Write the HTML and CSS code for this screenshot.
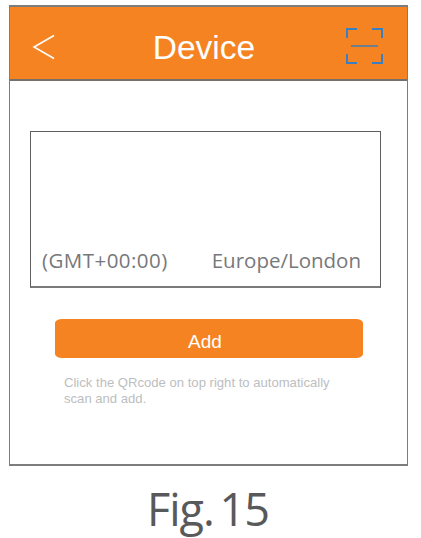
FILE: index.html
```html
<!DOCTYPE html>
<html lang="en">
<head>
  <meta charset="UTF-8">
  <title>Device</title>
  <link rel="stylesheet" href="styles.css">
</head>
<body>

  <div class="phone">
    <div class="header">
      <svg class="back-icon" width="24" height="26" viewBox="0 0 24 26">
        <path d="M22 1.5 L2 13 L22 24.5" fill="none" stroke="#fff" stroke-width="1.6"/>
      </svg>
      <div class="header-title">Device</div>
      <svg class="scan-icon" width="37" height="36" viewBox="0 0 37 36">
        <path d="M11 1 H1 V10 M26 1 H36 V10 M1 26 V35 H11 M36 26 V35 H26" fill="none" stroke="#3a7fc0" stroke-width="2"/>
        <path d="M5 18 H32" fill="none" stroke="#6d7f8c" stroke-width="2"/>
      </svg>
    </div>

    <div class="content">
      <div class="zone-box">
        <span class="zone-offset">(GMT+00:00)</span>
        <span>Europe/London</span>
      </div>
      <div class="add-btn">Add</div>
      <p class="hint">Click the QRcode on top right to automatically<br>scan and add.</p>
    </div>
  </div>

  <div class="caption">Fig. 15</div>

</body>
</html>
```

FILE: styles.css
```css
div, p {
  box-sizing: border-box;
}

body {
  margin: 0;
  padding: 5px 0 0 9px;
  width: 421px;
  height: 538px;
  overflow: hidden;
  background: #fff;
}

.phone {
  width: 399px;
  height: 461px;
  border: 1px solid #7d7d7d;
  border-top-width: 2px;
  border-bottom-width: 2px;
}

.header {
  height: 74px;
  padding: 0 24px 0 22px;
  background: #f58322;
  border-bottom: 2px solid #77706a;
  display: flex;
  align-items: center;
  justify-content: space-between;
}

.back-icon {
  margin-top: 8px;
}

.scan-icon {
  margin-top: 6px;
}

.header-title {
  font-family: "Liberation Sans", Arial, sans-serif;
  font-size: 33.5px;
  color: #fff;
  margin: 10px 0 0 6px;
}

.content {
  padding: 50px 0 0 20px;
}

.zone-box {
  width: 351px;
  height: 157px;
  padding: 0 19px 12px 11px;
  border: 1px solid #5f5f5f;
  border-bottom: 2px solid #7a7a7a;
  display: flex;
  align-items: flex-end;
  justify-content: space-between;
  font-family: "Open Sans", "Noto Sans", sans-serif;
  font-size: 20.5px;
  line-height: 27px;
  color: #77787b;
}

.zone-offset {
  letter-spacing: 0.45px;
}

.add-btn {
  width: 308px;
  height: 39px;
  margin: 31px 0 0 25px;
  padding-right: 8px;
  background: #f58322;
  border-radius: 7px / 4px;
  font-family: "Liberation Sans", Arial, sans-serif;
  font-size: 19px;
  line-height: 46px;
  text-align: center;
  color: #fff;
}

.hint {
  margin: 17px 0 0 34px;
  font-family: "Liberation Sans", Arial, sans-serif;
  font-size: 13.1px;
  line-height: 16px;
  color: #bcbec0;
}

.caption {
  margin: 16px 0 0 0;
  padding-left: 138px;
  font-family: "Open Sans", "Noto Sans", sans-serif;
  font-size: 45px;
  line-height: 54px;
  letter-spacing: -1px;
  word-spacing: -5px;
  color: #58595b;
}
```
